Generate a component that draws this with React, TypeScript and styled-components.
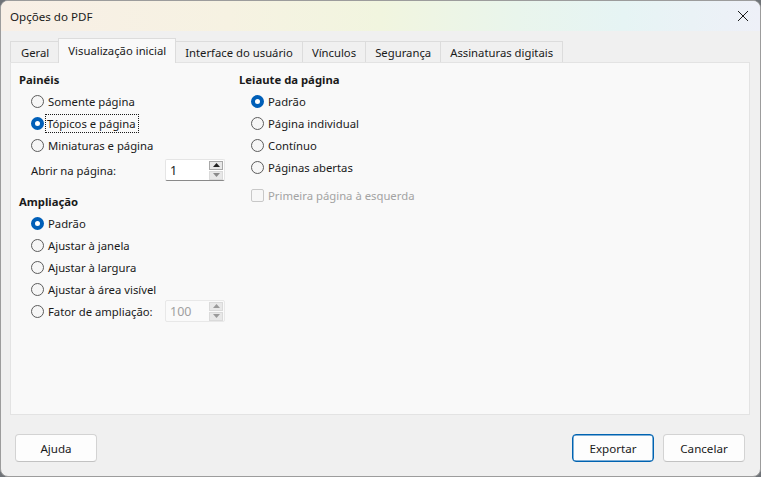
import styled, { createGlobalStyle, css } from 'styled-components'

const GlobalStyle = createGlobalStyle`
  html, body {
    margin: 0;
    padding: 0;
    background: #6f7378;
  }
  body {
    font-family: "Noto Sans", "Open Sans", sans-serif;
    font-size: 11.3px;
    color: #1b1b1b;
  }
  * {
    box-sizing: border-box;
  }
`

const Window = styled.div`
  display: flex;
  flex-direction: column;
  width: 761px;
  height: 477px;
  background: #f0f0f0;
  border: 1px solid #9c9c9c;
  border-radius: 8px;
  overflow: hidden;
`

const TitleBar = styled.div`
  display: flex;
  align-items: center;
  justify-content: space-between;
  height: 30px;
  padding: 0 10px 0 9px;
  background: linear-gradient(90deg, #f8efe6 0%, #f6f2e2 30%, #f1f5df 50%, #e9f5ec 68%, #e6f4f4 82%, #eef0f8 100%);
`

const Title = styled.span`
  font-size: 11.6px;
  color: #1a1a1a;
`

const CloseButton = styled.div`
  display: flex;
  align-items: center;
  justify-content: center;
  width: 14px;
  height: 14px;
`

const Body = styled.div`
  display: flex;
  flex-direction: column;
  padding: 8px 10px 0 9px;
`

const Tabs = styled.div`
  display: flex;
  align-items: flex-end;
  height: 24px;
  position: relative;
  z-index: 1;
`

const Tab = styled.div<{ $active?: boolean }>`
  display: flex;
  align-items: center;
  height: 21px;
  padding: 0 9px 0 9px;
  margin-bottom: 1px;
  background: #f0f0f0;
  border: 1px solid #dcdcdc;
  border-left: none;
  border-bottom: none;
  color: #1a1a1a;
  white-space: nowrap;
  &:first-child {
    border-left: 1px solid #dcdcdc;
    padding-left: 10px;
  }
  ${(p) =>
    p.$active &&
    css`
      height: 25px;
      margin-bottom: 0;
      margin-left: -1px;
      background: #f9f9f9;
      border-left: 1px solid #dcdcdc;
      padding: 0 9px 2px 9px;
    `}
`

const Panel = styled.div`
  display: grid;
  grid-template-columns: 208px 1fr;
  column-gap: 12px;
  align-items: start;
  height: 353px;
  margin-top: -1px;
  padding: 6px 8px 0 8px;
  background: #f9f9f9;
  border: 1px solid #e3e3e3;
`

const Column = styled.div`
  display: flex;
  flex-direction: column;
`

const SectionTitle = styled.div<{ $gap?: number }>`
  display: flex;
  align-items: center;
  height: 21px;
  margin-top: ${(p) => p.$gap ?? 0}px;
  font-weight: 700;
  color: #1a1a1a;
`

const Row = styled.div<{ $gap?: number; $disabled?: boolean }>`
  display: flex;
  align-items: center;
  height: 22px;
  padding-left: 12px;
  margin-top: ${(p) => p.$gap ?? 0}px;
  color: ${(p) => (p.$disabled ? '#a3a3a3' : '#1a1a1a')};
`

const Radio = styled.span<{ $checked?: boolean }>`
  display: inline-block;
  flex: none;
  width: 13px;
  height: 13px;
  margin-right: 4px;
  border-radius: 50%;
  border: 1px solid #5c5c5c;
  background: #f6f6f6;
  ${(p) =>
    p.$checked &&
    css`
      border: 4px solid #005fb8;
      background: #ffffff;
    `}
`

const CheckBox = styled.span`
  display: inline-block;
  flex: none;
  width: 13px;
  height: 13px;
  margin-right: 4px;
  border: 1px solid #c8c8c8;
  border-radius: 2px;
  background: #f7f7f7;
`

const Focused = styled.span`
  outline: 1px dotted #1a1a1a;
  outline-offset: 1px;
  padding: 0 1px 0 0;
  margin-left: -1px;
`

const FieldLabel = styled.span`
  width: 134px;
  flex: none;
`

const RadioLabel = styled.span`
  display: flex;
  align-items: center;
  width: 134px;
  flex: none;
`

const SpinBox = styled.div<{ $disabled?: boolean }>`
  display: flex;
  align-items: center;
  justify-content: space-between;
  width: 60px;
  height: 22px;
  padding: 0 1px 0 4px;
  background: ${(p) => (p.$disabled ? '#fafafa' : '#ffffff')};
  border: 1px solid ${(p) => (p.$disabled ? '#e8e8e8' : '#e5e5e5')};
  border-bottom-color: ${(p) => (p.$disabled ? '#e8e8e8' : '#8a8a8a')};
  border-radius: 2px;
  color: ${(p) => (p.$disabled ? '#a0a0a0' : '#1a1a1a')};
  font-size: 12.5px;
`

const SpinButtons = styled.div`
  display: flex;
  flex-direction: column;
  gap: 1px;
`

const SpinButton = styled.div<{ $strong?: boolean }>`
  display: flex;
  align-items: center;
  justify-content: center;
  width: 14px;
  height: 9px;
  background: #e8e8e8;
  border: 1px solid ${(p) => (p.$strong ? '#a8a8a8' : '#dadada')};
`

const Footer = styled.div`
  display: flex;
  align-items: center;
  justify-content: space-between;
  padding: 19px 15px 0 14px;
`

const ButtonGroup = styled.div`
  display: flex;
  gap: 9px;
`

const Button = styled.div<{ $primary?: boolean }>`
  display: flex;
  align-items: center;
  justify-content: center;
  width: 82px;
  height: 28px;
  background: #fdfdfd;
  border: 1px solid ${(p) => (p.$primary ? '#0063b1' : '#d3d3d3')};
  border-bottom-color: ${(p) => (p.$primary ? '#0063b1' : '#c2c2c2')};
  border-radius: 4px;
  color: #1a1a1a;
  font-size: 11.6px;
  ${(p) =>
    p.$primary &&
    css`
      box-shadow: inset 0 0 0 0.5px #0063b1;
    `}
`

function Arrow({ up, color }: { up?: boolean; color: string }) {
  return (
    <svg width="7" height="4" viewBox="0 0 7 4">
      <path d={up ? 'M0 4 L3.5 0 L7 4 Z' : 'M0 0 L3.5 4 L7 0 Z'} fill={color} />
    </svg>
  )
}

function Spin({ value, disabled }: { value: string; disabled?: boolean }) {
  const c = disabled ? '#9a9a9a' : '#222'
  return (
    <SpinBox $disabled={disabled}>
      <span>{value}</span>
      <SpinButtons>
        <SpinButton $strong={!disabled}>
          <Arrow up color={c} />
        </SpinButton>
        <SpinButton>
          <Arrow color={disabled ? '#9a9a9a' : '#8a8a8a'} />
        </SpinButton>
      </SpinButtons>
    </SpinBox>
  )
}

export default function App() {
  return (
    <>
      <GlobalStyle />
      <Window>
        <TitleBar>
          <Title>Opções do PDF</Title>
          <CloseButton>
            <svg width="12" height="12" viewBox="0 0 12 12">
              <path d="M1 1 L11 11 M11 1 L1 11" stroke="#1a1a1a" strokeWidth="1" />
            </svg>
          </CloseButton>
        </TitleBar>
        <Body>
          <Tabs>
            <Tab>Geral</Tab>
            <Tab $active>Visualização inicial</Tab>
            <Tab>Interface do usuário</Tab>
            <Tab>Vínculos</Tab>
            <Tab>Segurança</Tab>
            <Tab>Assinaturas digitais</Tab>
          </Tabs>
          <Panel>
            <Column>
              <SectionTitle>Painéis</SectionTitle>
              <Row>
                <Radio />
                Somente página
              </Row>
              <Row>
                <Radio $checked />
                <Focused>Tópicos e página</Focused>
              </Row>
              <Row>
                <Radio />
                Miniaturas e página
              </Row>
              <Row $gap={3}>
                <FieldLabel>Abrir na página:</FieldLabel>
                <Spin value="1" />
              </Row>
              <SectionTitle $gap={10}>Ampliação</SectionTitle>
              <Row>
                <Radio $checked />
                Padrão
              </Row>
              <Row>
                <Radio />
                Ajustar à janela
              </Row>
              <Row>
                <Radio />
                Ajustar à largura
              </Row>
              <Row>
                <Radio />
                Ajustar à área visível
              </Row>
              <Row>
                <RadioLabel>
                  <Radio />
                  Fator de ampliação:
                </RadioLabel>
                <Spin value="100" disabled />
              </Row>
            </Column>
            <Column>
              <SectionTitle>Leiaute da página</SectionTitle>
              <Row>
                <Radio $checked />
                Padrão
              </Row>
              <Row>
                <Radio />
                Página individual
              </Row>
              <Row>
                <Radio />
                Contínuo
              </Row>
              <Row>
                <Radio />
                Páginas abertas
              </Row>
              <Row $gap={6} $disabled>
                <CheckBox />
                Primeira página à esquerda
              </Row>
            </Column>
          </Panel>
        </Body>
        <Footer>
          <Button>Ajuda</Button>
          <ButtonGroup>
            <Button $primary>Exportar</Button>
            <Button>Cancelar</Button>
          </ButtonGroup>
        </Footer>
      </Window>
    </>
  )
}
